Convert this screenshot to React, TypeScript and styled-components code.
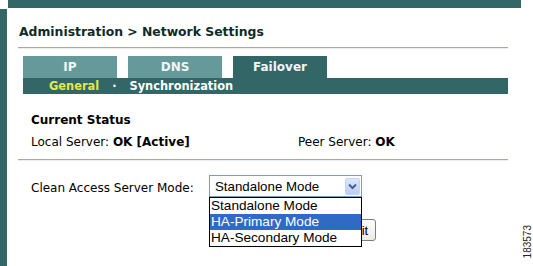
import React from "react";
import styled, {createGlobalStyle} from "styled-components";

const GlobalStyle = createGlobalStyle`
  html, body {
    margin: 0;
    padding: 0;
    background: #ffffff;
  }
  body {
    font-family: "DejaVu Sans", Verdana, sans-serif;
  }
`

const Shell = styled.div`
  width: 533px;
  height: 266px;
  display: grid;
  grid-template-columns: 8px 1fr 12px;
  grid-template-rows: 9px 1fr;
  overflow: hidden;
  background: #fff;
`

const TopBar = styled.div`
  grid-column: 2;
  grid-row: 1;
  height: 8px;
  background: #336666;
`

const SideBar = styled.div`
  grid-column: 1;
  grid-row: 2;
  width: 7px;
  background: #336666;
`

const FigureNo = styled.div`
  grid-column: 3;
  grid-row: 2;
  align-self: end;
  justify-self: end;
  margin: 0 1px 8px 0;
  writing-mode: vertical-rl;
  transform: rotate(180deg);
  font-family: "Liberation Sans", Arial, sans-serif;
  font-size: 10px;
  line-height: 8px;
  color: #222;
`

const Main = styled.div`
  grid-column: 2;
  grid-row: 2;
  padding: 15px 13px 0 10px;
  display: flex;
  flex-direction: column;
`

const Title = styled.div`
  padding-left: 1px;
  font-size: 12.4px;
  line-height: 16px;
  font-weight: bold;
  color: #0f2a2a;
`

const Rule = styled.div<{ $gap: number }>`
  margin-top: ${p => p.$gap}px;
  height: 1px;
  border-top: 1px solid #a8a89e;
  background: #ececea;
`

const Tabs = styled.div`
  margin: 7px 0 0 5px;
  display: flex;
  gap: 11px;
`

const Tab = styled.div<{ $active?: boolean }>`
  width: 94px;
  height: 22px;
  display: flex;
  align-items: center;
  justify-content: center;
  font-size: 12px;
  font-weight: bold;
  color: #f2f6f6;
  background: ${p => p.$active ? "#336666" : "#669999"};
`

const SubNav = styled.div`
  margin-left: 5px;
  height: 16px;
  padding-left: 26px;
  display: flex;
  align-items: center;
  gap: 11px;
  background: #336666;
  font-size: 11.4px;
  font-weight: bold;
`

const SubLink = styled.span<{ $current?: boolean }>`
  color: ${p => p.$current ? "#e3e650" : "#ffffff"};
`

const Dot = styled.span`
  color: #ffffff;
  padding: 0 2px;
`

const Section = styled.div`
  padding: 19px 0 0 13px;
  display: flex;
  flex-direction: column;
  gap: 7px;
  font-size: 12px;
  line-height: 15px;
  color: #000;
`

const SectionTitle = styled.div`
  font-weight: bold;
`

const StatusRow = styled.div`
  display: grid;
  grid-template-columns: 267px 1fr;
`

const FormRow = styled.div`
  padding: 14px 0 0 13px;
  display: flex;
  align-items: flex-start;
`

const Label = styled.div`
  width: 178px;
  padding-top: 6px;
  font-size: 12px;
  line-height: 15px;
  color: #000;
`

const SelectWrap = styled.div`
  position: relative;
  width: 153px;
`

const SelectBox = styled.div`
  height: 20px;
  border: 1px solid #7f9db9;
  display: flex;
  align-items: center;
  justify-content: space-between;
  padding: 0 1px 0 5px;
  font-family: "Liberation Sans", Arial, sans-serif;
  font-size: 13.3px;
  color: #000;
  background: #fff;
`

const ArrowBtn = styled.div`
  width: 15px;
  height: 17px;
  display: flex;
  align-items: center;
  justify-content: center;
  border: 1px solid #c3d3fd;
  border-radius: 2px;
  box-sizing: border-box;
  background: linear-gradient(#dce6fd, #b9cdf9);
`

const ListBox = styled.div`
  position: absolute;
  top: 22px;
  left: 0;
  right: 0;
  border: 1px solid #000;
  background: #fff;
  z-index: 2;
  font-family: "Liberation Sans", Arial, sans-serif;
  font-size: 13.6px;
`

const Option = styled.div<{ $selected?: boolean }>`
  height: 16px;
  line-height: 16px;
  padding-left: 1px;
  color: ${p => p.$selected ? "#fff" : "#000"};
  background: ${p => p.$selected ? "#316ac5" : "transparent"};
`

const ButtonRow = styled.div`
  padding: 22px 0 0 302px;
  display: flex;
`

const Button = styled.button`
  width: 56px;
  height: 22px;
  padding: 0;
  border: 1px solid #7a7f86;
  border-radius: 3px;
  background: linear-gradient(#fefefe, #eceae2);
  font-family: "Liberation Sans", Arial, sans-serif;
  font-size: 13px;
  color: #000;
`

const modes = ["Standalone Mode", "HA-Primary Mode", "HA-Secondary Mode"];

function App() {
    return (
        <>
            <GlobalStyle/>
            <Shell>
                <TopBar/>
                <SideBar/>
                <Main>
                    <Title>Administration &gt; Network Settings</Title>
                    <Rule $gap={7}/>
                    <Tabs>
                        <Tab>IP</Tab>
                        <Tab>DNS</Tab>
                        <Tab $active>Failover</Tab>
                    </Tabs>
                    <SubNav>
                        <SubLink $current>General</SubLink>
                        <Dot>·</Dot>
                        <SubLink>Synchronization</SubLink>
                    </SubNav>
                    <Section>
                        <SectionTitle>Current Status</SectionTitle>
                        <StatusRow>
                            <div>Local Server: <b>OK [Active]</b></div>
                            <div>Peer Server: <b>OK</b></div>
                        </StatusRow>
                    </Section>
                    <Rule $gap={9}/>
                    <FormRow>
                        <Label>Clean Access Server Mode:</Label>
                        <SelectWrap>
                            <SelectBox>
                                {modes[0]}
                                <ArrowBtn>
                                    <svg width="9" height="7" viewBox="0 0 9 7">
                                        <path d="M1 1.5 L4.5 5 L8 1.5" fill="none" stroke="#4d6185" strokeWidth="2"/>
                                    </svg>
                                </ArrowBtn>
                            </SelectBox>
                            <ListBox>
                                {modes.map((m, i) =>
                                    <Option key={m} $selected={i === 1}>{m}</Option>
                                )}
                            </ListBox>
                        </SelectWrap>
                    </FormRow>
                    <ButtonRow>
                        <Button>Submit</Button>
                    </ButtonRow>
                </Main>
                <FigureNo>183573</FigureNo>
            </Shell>
        </>
    );
}

export default App;
